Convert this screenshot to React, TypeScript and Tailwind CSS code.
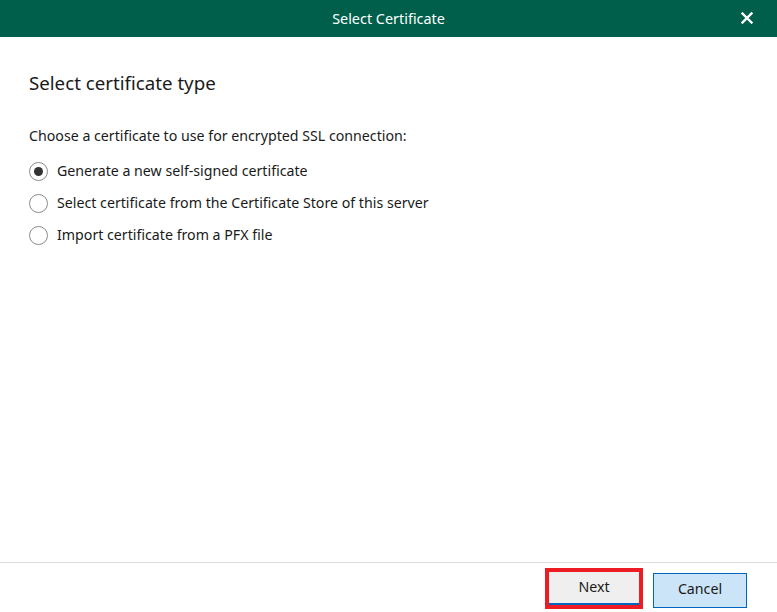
import React from "react";

function Radio({ checked, label }: { checked?: boolean; label: string }) {
  return (
    <div className="flex items-center h-[32px]">
      <div className="w-[19px] h-[19px] rounded-full border border-[#8a8a8a] bg-white flex items-center justify-center shrink-0">
        {checked && <div className="w-[9px] h-[9px] rounded-full bg-[#333333]" />}
      </div>
      <span className="ml-[9px] text-[14.2px] text-[#1a1a1a]">{label}</span>
    </div>
  );
}

export default function App() {
  return (
    <div
      className="w-[777px] h-[612px] bg-white flex flex-col overflow-hidden"
      style={{ fontFamily: '"Noto Sans", "Open Sans", sans-serif' }}
    >
      <div className="h-[37px] bg-[#005f4b] flex items-center justify-center relative shrink-0">
        <span className="text-white text-[14.4px]">Select Certificate</span>
        <svg className="absolute right-[24px] top-[12px]" width="12" height="12" viewBox="0 0 12 12">
          <path d="M1.5 1.5 L10.5 10.5 M10.5 1.5 L1.5 10.5" stroke="white" strokeWidth="2.4" strokeLinecap="square" />
        </svg>
      </div>
      <div className="flex-1 px-[29px] pt-[33px]">
        <div className="text-[18.7px] text-[#1a1a1a] leading-[26px]">Select certificate type</div>
        <div className="mt-[30px] text-[14.2px] text-[#1a1a1a] leading-[20px]">
          Choose a certificate to use for encrypted SSL connection:
        </div>
        <div className="mt-[9px] flex flex-col">
          <Radio checked label="Generate a new self-signed certificate" />
          <Radio label="Select certificate from the Certificate Store of this server" />
          <Radio label="Import certificate from a PFX file" />
        </div>
      </div>
      <div className="h-[50px] border-t border-[#dcdcdc] flex items-start justify-end pr-[30px] pt-[5px] gap-[10px] shrink-0">
        <div className="w-[98px] h-[41px] border-[4px] border-[#ed1c24] flex">
          <button className="flex-1 bg-[#efefef] border-b-[2px] border-[#0067c0] text-[14.2px] text-[#1a1a1a] pb-[1px]">
            Next
          </button>
        </div>
        <button className="mt-[5px] w-[94px] h-[35px] bg-[#cce4f7] border border-[#0067c0] text-[14.2px] text-[#1a1a1a] pb-[3px]">
          Cancel
        </button>
      </div>
    </div>
  );
}
